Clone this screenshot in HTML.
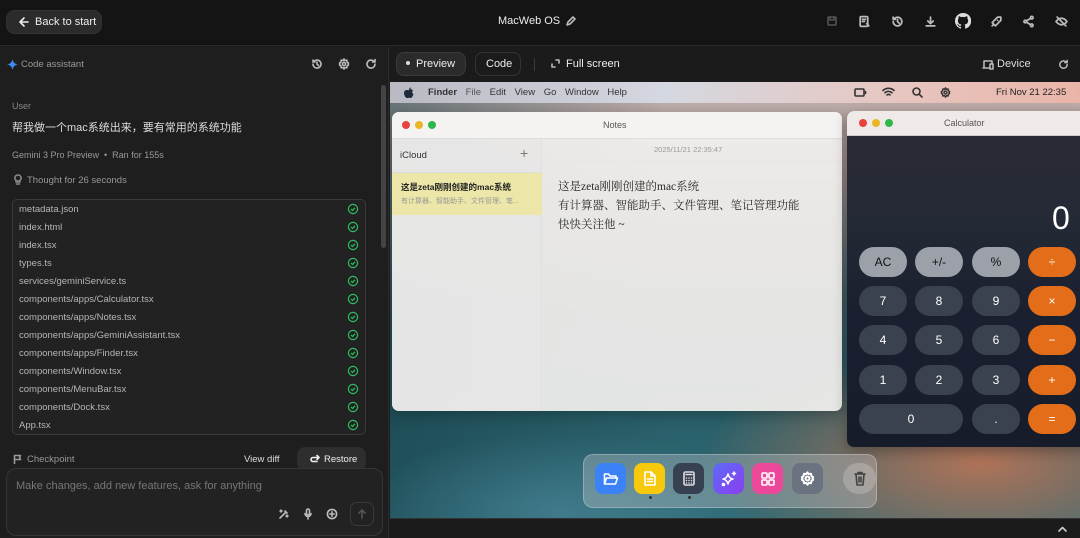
<!DOCTYPE html>
<html><head><meta charset="utf-8"><style>
*{box-sizing:border-box;margin:0;padding:0}
body{width:1080px;height:538px;overflow:hidden;background:#1b1b1b;font-family:"Liberation Sans","Noto Sans CJK SC",sans-serif;color:#ddd;position:relative}
.a{position:absolute}
svg{display:block}
.ic{stroke:#bbb;fill:none;stroke-width:1.6;stroke-linecap:round;stroke-linejoin:round}
.row{position:absolute;left:19px;font-size:9.5px;color:#b5b5b5}
.ck{position:absolute;left:348px}
.btn{position:absolute;width:48px;height:30px;border-radius:15px;background:#3a4250;color:#fff;font-size:12px;display:flex;align-items:center;justify-content:center}
.g{background:#9ca0a8;color:#111}
.o{background:#e46d1a}
.dk{position:absolute;top:463px;width:31px;height:31px;border-radius:8px;display:flex;align-items:center;justify-content:center}
</style></head><body>
<!-- top bar -->
<div class="a" style="left:0;top:0;width:1080px;height:46px;background:#141414;border-bottom:1px solid #2a2a2a"></div>
<div class="a" style="left:6px;top:10px;width:96px;height:24px;border-radius:9px;background:#2b2b2b;border:1px solid #333;font-size:11px;color:#eee;display:flex;align-items:center;padding-left:11px">
<svg width="12" height="12" viewBox="0 0 12 12" class="ic" style="stroke:#eee;margin-right:5px"><path d="M10 6H2M6 2L2 6l4 4"/></svg>Back to start</div>
<div class="a" style="left:498px;top:15px;font-size:11px;color:#eee">MacWeb OS</div>
<svg class="a ic" style="left:565px;top:15px" width="12" height="12" viewBox="0 0 12 12"><path d="M2 10l1-3 5-5 2 2-5 5z"/></svg>
<svg class="a ic" style="left:826px;top:15px;stroke:#555" width="12" height="12" viewBox="0 0 12 12"><rect x="2" y="2" width="8" height="8" rx="1"/><path d="M4 2v3h4V2"/></svg>
<svg class="a ic" style="left:858px;top:15px" width="13" height="13" viewBox="0 0 12 12"><rect x="2" y="1.5" width="7" height="9" rx="1"/><path d="M4 4h3M4 6h2M8 8l2 2"/></svg>
<svg class="a ic" style="left:891px;top:15px" width="13" height="13" viewBox="0 0 12 12"><path d="M2 6a4 4 0 1 0 1.2-2.8M2 2v2h2M6 4v2l1.5 1.5"/></svg>
<svg class="a ic" style="left:924px;top:15px" width="13" height="13" viewBox="0 0 12 12"><path d="M6 2v6M3.5 5.5L6 8l2.5-2.5M2 10h8"/></svg>
<svg class="a" style="left:955px;top:13px" width="16" height="16" viewBox="0 0 16 16"><path fill="#ddd" d="M8 0a8 8 0 0 0-2.5 15.6c.4 0 .5-.2.5-.4v-1.4c-2.2.5-2.7-1-2.7-1-.4-.9-.9-1.2-.9-1.2-.7-.5.1-.5.1-.5.8.1 1.2.8 1.2.8.7 1.3 1.9.9 2.3.7.1-.5.3-.9.5-1.1-1.8-.2-3.6-.9-3.6-4 0-.9.3-1.6.8-2.1-.1-.2-.4-1 .1-2.1 0 0 .7-.2 2.2.8a7.6 7.6 0 0 1 4 0c1.5-1 2.2-.8 2.2-.8.4 1.1.2 1.900.1 2.1.5.6.8 1.300.8 2.1 0 3.1-1.900 3.800-3.600 4 .3.3.6.8.6 1.500v2.200c0 .2.100.500.600.400A8 8 0 0 0 8 0z"/></svg>
<svg class="a ic" style="left:990px;top:15px" width="13" height="13" viewBox="0 0 12 12"><path d="M3 9l-1 1M5 10l5-5V2H7L2 7zM7 5h0"/></svg>
<svg class="a ic" style="left:1022px;top:15px" width="13" height="13" viewBox="0 0 12 12"><circle cx="9" cy="2.5" r="1.2"/><circle cx="3" cy="6" r="1.2"/><circle cx="9" cy="9.5" r="1.2"/><path d="M4 5.5l4-2.5M4 6.5l4 2.5"/></svg>
<svg class="a ic" style="left:1055px;top:15px" width="13" height="13" viewBox="0 0 12 12"><path d="M1 6s2-3 5-3 5 3 5 3-2 3-5 3-5-3-5-3M2 2l8 8"/></svg>

<!-- left panel -->
<div class="a" style="left:0;top:47px;width:389px;height:491px;background:#1e1e1e;border-right:1px solid #2c2c2c"></div>
<svg class="a" style="left:7px;top:59px" width="11" height="11" viewBox="0 0 10 10"><path fill="#3b8cf0" d="M5 0C5.5 3 7 4.5 10 5 7 5.5 5.5 7 5 10 4.5 7 3 5.5 0 5 3 4.5 4.5 3 5 0z"/></svg>
<div class="a" style="left:21px;top:59px;font-size:9.5px;color:#999">Code assistant</div>
<svg class="a ic" style="left:311px;top:58px" width="12" height="12" viewBox="0 0 12 12"><path d="M2 6a4 4 0 1 0 1.2-2.8M2 2v2h2M6 4v2l1.5 1.5"/></svg>
<svg class="a ic" style="left:338px;top:58px" width="12" height="12" viewBox="0 0 12 12"><circle cx="6" cy="6" r="1.6"/><path d="M6 1l1 1.5 1.8-.3.3 1.8L10.5 5 10 6l.5 1-1.4 1 -.3 1.8-1.8-.3L6 11 5 9.5l-1.8.3-.3-1.8L1.5 7 2 6l-.5-1 1.4-1 .3-1.8 1.8.3z"/></svg>
<svg class="a ic" style="left:365px;top:58px" width="12" height="12" viewBox="0 0 12 12"><path d="M10 6a4 4 0 1 1-1.2-2.8M10 1.5V4H7.5"/></svg>
<div class="a" style="left:381px;top:85px;width:5px;height:163px;border-radius:3px;background:#444"></div>
<div class="a" style="left:12px;top:101px;font-size:9px;color:#888">User</div>
<div class="a" style="left:12px;top:119px;font-size:11px;color:#ddd">帮我做一个mac系统出来，要有常用的系统功能</div>
<div class="a" style="left:12px;top:150px;font-size:9px;color:#999">Gemini 3 Pro Preview &nbsp;•&nbsp; Ran for 155s</div>
<svg class="a ic" style="left:13px;top:174px;stroke:#888" width="10" height="11" viewBox="0 0 10 11"><path d="M3 8h4M3.5 10h3M5 1a3 3 0 0 0-2 5.3V7h4v-.7A3 3 0 0 0 5 1z"/></svg>
<div class="a" style="left:27px;top:175px;font-size:9.5px;color:#999">Thought for 26 seconds</div>
<div class="a" style="left:12px;top:199px;width:354px;height:236px;border:1px solid #3a3a3a;border-radius:5px;background:#222"></div>
<div class="row" style="top:204px">metadata.json</div>
<div class="row" style="top:222px">index.html</div>
<div class="row" style="top:240px">index.tsx</div>
<div class="row" style="top:258px">types.ts</div>
<div class="row" style="top:276px">services/geminiService.ts</div>
<div class="row" style="top:294px">components/apps/Calculator.tsx</div>
<div class="row" style="top:312px">components/apps/Notes.tsx</div>
<div class="row" style="top:330px">components/apps/GeminiAssistant.tsx</div>
<div class="row" style="top:348px">components/apps/Finder.tsx</div>
<div class="row" style="top:366px">components/Window.tsx</div>
<div class="row" style="top:384px">components/MenuBar.tsx</div>
<div class="row" style="top:402px">components/Dock.tsx</div>
<div class="row" style="top:420px">App.tsx</div>
<svg class="a" style="left:347px;top:203px" width="12" height="230" viewBox="0 0 12 230">
<g fill="none" stroke="#2fbf63" stroke-width="1.2"><g id="c"><circle cx="6" cy="6" r="4.6"/><path d="M4 6l1.5 1.5L8 4.8"/></g>
<use href="#c" y="18"/><use href="#c" y="36"/><use href="#c" y="54"/><use href="#c" y="72"/><use href="#c" y="90"/><use href="#c" y="108"/><use href="#c" y="126"/><use href="#c" y="144"/><use href="#c" y="162"/><use href="#c" y="180"/><use href="#c" y="198"/><use href="#c" y="216"/></g></svg>
<svg class="a ic" style="left:13px;top:454px;stroke:#999" width="10" height="10" viewBox="0 0 10 10"><path d="M1.5 10V1.5h6l-1 2 1 2h-6"/></svg>
<div class="a" style="left:27px;top:454px;font-size:9.5px;color:#999">Checkpoint</div>
<div class="a" style="left:244px;top:454px;font-size:9.5px;color:#ddd">View diff</div>
<div class="a" style="left:297px;top:447px;width:69px;height:24px;border-radius:8px;background:#2e2e2e;font-size:9.5px;color:#eee;padding:7px 0 0 13px">
<svg class="ic" style="display:inline;vertical-align:-1px;stroke:#eee;margin-right:4px" width="10" height="9" viewBox="0 0 10 9"><path d="M9 3.5H3a2 2 0 0 0 0 4h4M7 1.5l2 2-2 2"/></svg>Restore</div>
<div class="a" style="left:6px;top:468px;width:377px;height:68px;border:1px solid #353535;border-radius:10px;background:#222"></div>
<div class="a" style="left:16px;top:480px;font-size:11px;color:#777">Make changes, add new features, ask for anything</div>
<svg class="a ic" style="left:278px;top:508px" width="12" height="12" viewBox="0 0 12 12"><path d="M2 10l6-6M7 3l2 2M3 2v2M2 3h2M9 7v2M8 8h2"/></svg>
<svg class="a ic" style="left:302px;top:508px" width="12" height="12" viewBox="0 0 12 12"><rect x="4.5" y="1" width="3" height="6" rx="1.5"/><path d="M3 5.5a3 3 0 0 0 6 0M6 8.5V11"/></svg>
<svg class="a ic" style="left:326px;top:508px" width="12" height="12" viewBox="0 0 12 12"><circle cx="6" cy="6" r="4.6"/><path d="M6 3.8v4.4M3.8 6h4.4"/></svg>
<div class="a" style="left:350px;top:502px;width:24px;height:24px;border-radius:7px;border:1px solid #3a3a3a"></div>
<svg class="a ic" style="left:357px;top:509px;stroke:#555" width="10" height="10" viewBox="0 0 10 10"><path d="M5 9V1M2 4l3-3 3 3"/></svg>

<!-- right header -->
<div class="a" style="left:396px;top:52px;width:70px;height:24px;border-radius:8px;background:#2b2b2b;border:1px solid #3a3a3a;font-size:11px;color:#eee;padding:5px 0 0 9px"><span style="display:inline-block;width:4px;height:4px;border-radius:2px;background:#ddd;vertical-align:2px;margin-right:6px"></span>Preview</div>
<div class="a" style="left:475px;top:52px;width:46px;height:24px;border-radius:8px;border:1px solid #333;font-size:11px;color:#eee;padding:5px 0 0 10px">Code</div>
<div class="a" style="left:534px;top:58px;width:1px;height:13px;background:#3a3a3a"></div>
<svg class="a ic" style="left:551px;top:59px" width="9" height="9" viewBox="0 0 9 9"><path d="M1 5v3h3M5 1h3v3"/></svg>
<div class="a" style="left:566px;top:58px;font-size:11px;color:#eee">Full screen</div>
<svg class="a ic" style="left:982px;top:59px" width="12" height="11" viewBox="0 0 12 11"><path d="M1 9h6M2 8V2h8v2M8 5h3v5H8z"/></svg>
<div class="a" style="left:997px;top:58px;font-size:11px;color:#ddd">Device</div>
<svg class="a ic" style="left:1058px;top:59px" width="11" height="11" viewBox="0 0 12 12"><path d="M10 6a4 4 0 1 1-1.2-2.8M10 1.5V4H7.5"/></svg>

<!-- preview -->
<div class="a" style="left:390px;top:82px;width:690px;height:436px;overflow:hidden;background:linear-gradient(180deg,#c9b7b4 0%,#9c8b88 20%,#3f5c62 50%,#285c66 70%,#2e6a75 100%)">
 <div class="a" style="left:0;top:0;width:690px;height:436px;background:radial-gradient(ellipse 280px 120px at 590px 380px,rgba(220,120,80,.75),transparent),radial-gradient(ellipse 200px 80px at 170px 430px,rgba(80,140,160,.6),transparent),linear-gradient(90deg,rgba(20,60,70,.5),transparent 40%)"></div>
 <div class="a" style="left:0;top:0;width:690px;height:21px;background:linear-gradient(90deg,#b9b9c4,#d5d8e0 40%,#e6c8c4 70%,#eab5a8);font-size:9.5px;color:#222"></div>
 <svg class="a" style="left:13px;top:5px" width="12" height="12" viewBox="0 0 12 12"><path fill="#1e2a3a" d="M6 3c1-1 3-1 4 .5-1 .7-1.3 2.5.5 3.5-.5 1.5-1.5 4-3 4-1 0-1-.4-1.5-.4S5 11 4 11C2.5 11 1 8 1 6s1.5-3 2.8-3C4.8 3 5.3 3.5 6 3zM6 2.6C6 1.5 7 .5 8 .5 8 1.6 7 2.6 6 2.6z"/></svg>
 <div class="a" style="left:38px;top:5px;font-size:9.5px;color:#333;word-spacing:6px"><b>Finder</b> <span style="color:#555">File</span> Edit View Go Window Help</div>
 <svg class="a ic" style="left:464px;top:5px;stroke:#333" width="13" height="11" viewBox="0 0 13 11"><rect x="1" y="2" width="9" height="7" rx="1"/><path d="M11.5 4.5v2"/></svg>
 <svg class="a ic" style="left:492px;top:4px;stroke:#333" width="13" height="12" viewBox="0 0 13 12"><path d="M1 4.5a8 8 0 0 1 11 0M3 6.8a5 5 0 0 1 7 0M5 9a2 2 0 0 1 3 0"/></svg>
 <svg class="a ic" style="left:522px;top:5px;stroke:#333" width="11" height="11" viewBox="0 0 11 11"><circle cx="4.5" cy="4.5" r="3.5"/><path d="M7.3 7.3L10 10"/></svg>
 <svg class="a ic" style="left:550px;top:5px;stroke:#333" width="11" height="11" viewBox="0 0 12 12"><circle cx="6" cy="6" r="1.6"/><path d="M6 1l1 1.5 1.8-.3.3 1.8L10.5 5 10 6l.5 1-1.4 1 -.3 1.8-1.8-.3L6 11 5 9.5l-1.8.3-.3-1.8L1.5 7 2 6l-.5-1 1.4-1 .3-1.8 1.8.3z"/></svg>
 <div class="a" style="left:606px;top:5px;font-size:9.5px;color:#222">Fri Nov 21 22:35</div>

 <!-- notes window -->
 <div class="a" style="left:2px;top:30px;width:450px;height:299px;border-radius:7px;overflow:hidden;background:rgba(242,240,238,.93);box-shadow:0 4px 14px rgba(0,0,0,.25)">
  <div class="a" style="left:0;top:0;width:450px;height:27px;border-bottom:1px solid #ddd;background:rgba(245,244,243,.9)"></div>
  <div class="a" style="left:10px;top:9px;width:8px;height:8px;border-radius:4px;background:#e8423d"></div>
  <div class="a" style="left:23px;top:9px;width:8px;height:8px;border-radius:4px;background:#e9b724"></div>
  <div class="a" style="left:36px;top:9px;width:8px;height:8px;border-radius:4px;background:#2fb84a"></div>
  <div class="a" style="left:211px;top:8px;font-size:9px;color:#555">Notes</div>
  <div class="a" style="left:0;top:28px;width:150px;height:271px;background:rgba(230,230,230,.6);border-right:1px solid #e0e0e0"></div>
  <div class="a" style="left:8px;top:38px;font-size:9.5px;color:#333">iCloud</div>
  <div class="a" style="left:128px;top:33px;font-size:14px;color:#777">+</div>
  <div class="a" style="left:0;top:60px;width:150px;height:43px;background:#ece6a8;border-top:1px solid #ddd"></div>
  <div class="a" style="left:9px;top:69px;font-size:8.5px;color:#222;font-weight:bold">这是zeta刚刚创建的mac系统</div>
  <div class="a" style="left:9px;top:84px;font-size:7px;color:#999">有计算器、智能助手、文件管理、笔...</div>
  <div class="a" style="left:150px;top:28px;width:300px;height:22px;border-bottom:1px solid #e6e6e6"></div>
  <div class="a" style="left:262px;top:33px;font-size:7.5px;color:#999">2025/11/21 22:35:47</div>
  <div class="a" style="left:166px;top:66px;font-size:11.5px;line-height:19px;color:#2a2a2a;font-family:'Liberation Serif','Noto Serif CJK SC',serif">这是zeta刚刚创建的mac系统<br>有计算器、智能助手、文件管理、笔记管理功能<br>快快关注他 ~</div>
 </div>

 <!-- calculator -->
 <div class="a" style="left:457px;top:29px;width:240px;height:336px;border-radius:7px 0 0 7px;overflow:hidden;background:linear-gradient(180deg,#2a2a34 0%,#252a36 30%,#1a2030 60%,#161c2a);box-shadow:0 4px 14px rgba(0,0,0,.3)">
  <div class="a" style="left:0;top:0;width:240px;height:25px;background:#efe9e8;border-bottom:1px solid #ccc"></div>
  <div class="a" style="left:12px;top:8px;width:8px;height:8px;border-radius:4px;background:#e8423d"></div>
  <div class="a" style="left:25px;top:8px;width:8px;height:8px;border-radius:4px;background:#e9b724"></div>
  <div class="a" style="left:38px;top:8px;width:8px;height:8px;border-radius:4px;background:#2fb84a"></div>
  <div class="a" style="left:97px;top:7px;font-size:9px;color:#555">Calculator</div>
  <div class="a" style="left:205px;top:89px;font-size:32px;font-weight:300;color:#fff">0</div>
 </div>
 <div class="btn g" style="left:469px;top:165px">AC</div>
 <div class="btn g" style="left:525px;top:165px">+/-</div>
 <div class="btn g" style="left:582px;top:165px">%</div>
 <div class="btn o" style="left:638px;top:165px">÷</div>
 <div class="btn" style="left:469px;top:204px">7</div>
 <div class="btn" style="left:525px;top:204px">8</div>
 <div class="btn" style="left:582px;top:204px">9</div>
 <div class="btn o" style="left:638px;top:204px">×</div>
 <div class="btn" style="left:469px;top:243px">4</div>
 <div class="btn" style="left:525px;top:243px">5</div>
 <div class="btn" style="left:582px;top:243px">6</div>
 <div class="btn o" style="left:638px;top:243px">−</div>
 <div class="btn" style="left:469px;top:283px">1</div>
 <div class="btn" style="left:525px;top:283px">2</div>
 <div class="btn" style="left:582px;top:283px">3</div>
 <div class="btn o" style="left:638px;top:283px">+</div>
 <div class="btn" style="left:469px;top:322px;width:104px">0</div>
 <div class="btn" style="left:582px;top:322px">.</div>
 <div class="btn o" style="left:638px;top:322px">=</div>
</div>

<!-- dock -->
<div class="a" style="left:583px;top:454px;width:294px;height:54px;border-radius:10px;background:rgba(200,200,205,.35);border:1px solid rgba(255,255,255,.25)"></div>
<div class="dk" style="left:595px;background:#3b82f6"><svg class="ic" style="stroke:#fff" width="16" height="14" viewBox="0 0 16 14"><path d="M1.5 12V2h4l1.5 2h6v2M1.5 12l2-6h11l-2 6z"/></svg></div>
<div class="dk" style="left:634px;background:#f7c90c"><svg class="ic" style="stroke:#fff" width="12" height="15" viewBox="0 0 12 15"><path d="M1 1h6l4 4v9H1zM7 1v4h4M3.5 8h5M3.5 10.5h5"/></svg></div>
<div class="dk" style="left:673px;background:#374152"><svg class="ic" style="stroke:#ddd" width="12" height="15" viewBox="0 0 12 15"><rect x="1" y="1" width="10" height="13" rx="1.5"/><path d="M3 3.5h6M3.5 7h0M6 7h0M8.5 7h0M3.5 9.5h0M6 9.5h0M8.5 9.5h0M3.5 12h0M6 12h0M8.5 12h0"/></svg></div>
<div class="dk" style="left:713px;background:linear-gradient(135deg,#5b6cf6,#8b3df0)"><svg class="ic" style="stroke:#fff" width="16" height="16" viewBox="0 0 16 16"><path d="M7 3c.6 3 2 4.4 5 5-3 .6-4.4 2-5 5-.6-3-2-4.4-5-5 3-.6 4.4-2 5-5zM13 1v3M11.5 2.5h3"/><circle cx="2.5" cy="13.5" r="1"/></svg></div>
<div class="dk" style="left:752px;background:#ec4899"><svg class="ic" style="stroke:#fff" width="14" height="14" viewBox="0 0 14 14"><rect x="1" y="1" width="5" height="5" rx="1"/><rect x="8" y="1" width="5" height="5" rx="1"/><rect x="1" y="8" width="5" height="5" rx="1"/><rect x="8" y="8" width="5" height="5" rx="1"/></svg></div>
<div class="dk" style="left:792px;background:#6b7280"><svg class="ic" style="stroke:#fff" width="15" height="15" viewBox="0 0 12 12"><circle cx="6" cy="6" r="1.6"/><path d="M6 1l1 1.5 1.8-.3.3 1.8L10.5 5 10 6l.5 1-1.4 1 -.3 1.8-1.8-.3L6 11 5 9.5l-1.8.3-.3-1.8L1.5 7 2 6l-.5-1 1.4-1 .3-1.8 1.8.3z"/></svg></div>
<div class="a" style="left:843px;top:463px;width:33px;height:31px;border-radius:16px;background:rgba(255,255,255,.2);display:flex;align-items:center;justify-content:center"><svg class="ic" style="stroke:#444" width="12" height="15" viewBox="0 0 12 15"><path d="M1 3h10M4 3V1.5h4V3M2 3l1 11h6l1-11M5 6v5M7 6v5"/></svg></div>
<div class="a" style="left:649px;top:496px;width:3px;height:3px;border-radius:2px;background:#333"></div>
<div class="a" style="left:688px;top:496px;width:3px;height:3px;border-radius:2px;background:#333"></div>

<div class="a" style="left:390px;top:518px;width:690px;height:20px;background:#1b1b1b;border-top:1px solid #333"></div>
<svg class="a ic" style="left:1058px;top:526px;stroke:#ccc" width="9" height="6" viewBox="0 0 9 6"><path d="M1 5l3.5-3.5L8 5"/></svg>
</body></html>
